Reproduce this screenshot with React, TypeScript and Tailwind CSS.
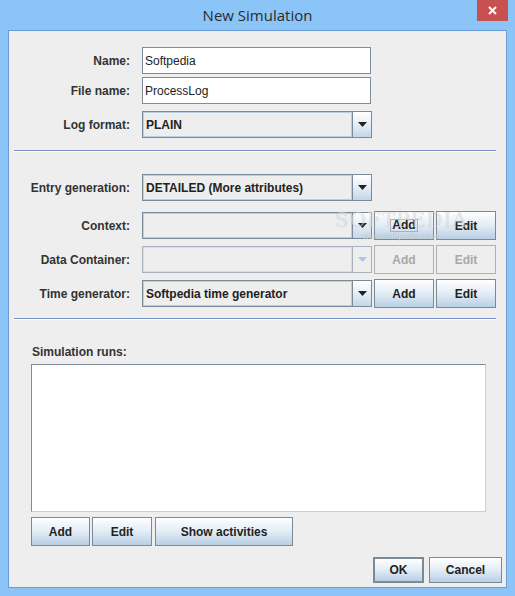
import React from 'react';

const btn =
  'flex items-center justify-center border border-[#7a8a99] bg-gradient-to-b from-white via-[#e3ecf5] to-[#b8cfe5] text-[12px] font-bold text-[#222]';
const btnOff = 'flex items-center justify-center border border-[#b0b0b0] bg-[#eeeeee] text-[12px] font-bold text-[#a8a8a8]';

function Label({ children }: { children: React.ReactNode }) {
  return <div className="w-[121px] shrink-0 text-right text-[12px] font-bold text-[#333]">{children}</div>;
}

function TextField({ value }: { value: string }) {
  return (
    <div className="ml-[12px] flex h-[27px] w-[229px] items-center border border-[#7f8c99] bg-white pl-[2px] text-[12px] text-[#222]">
      {value}
    </div>
  );
}

function Arrow({ disabled }: { disabled?: boolean }) {
  return (
    <svg width="9" height="6" viewBox="0 0 9 6">
      <path d="M0 0 H9 L4.5 5 Z" fill={disabled ? '#a9c6e6' : '#222'} />
    </svg>
  );
}

function Combo({ value, disabled }: { value?: string; disabled?: boolean }) {
  return (
    <div
      className={
        'ml-[12px] flex h-[27px] w-[230px] border ' + (disabled ? 'border-[#a7b2bd]' : 'border-[#7a8a99]')
      }
    >
      <div
        className={
          'flex flex-1 items-center border bg-[#eeeeee] pl-[2px] text-[12px] font-bold text-[#222] ' +
          (disabled ? 'border-[#d8dde2]' : 'border-[#bccfe2]')
        }
      >
        {value}
      </div>
      <div
        className={
          'flex w-[19px] items-center justify-center border-l ' +
          (disabled
            ? 'border-[#a7b2bd] bg-[#eeeeee]'
            : 'border-[#7a8a99] bg-gradient-to-b from-white via-[#e6eef6] to-[#c3d6e9]')
        }
      >
        <Arrow disabled={disabled} />
      </div>
    </div>
  );
}

function Separator({ className }: { className: string }) {
  return (
    <div className={'ml-[5px] w-[482px] ' + className}>
      <div className="h-px bg-[#7893c9]" />
      <div className="h-px bg-white" />
    </div>
  );
}

export default function App() {
  return (
    <div className="flex h-[596px] w-[515px] flex-col bg-[#8bc4f6] font-['Liberation_Sans',Arial,sans-serif]">
      <div className="relative flex h-[30px] shrink-0 items-center justify-center">
        <span className="font-['Open_Sans',sans-serif] text-[15px] text-[#2b2b2b]">New Simulation</span>
        <div className="absolute right-[7px] top-0 flex h-[21px] w-[31px] items-center justify-center bg-[#c75050]">
          <svg width="9" height="9" viewBox="0 0 9 9">
            <path d="M1 1 L8 8 M8 1 L1 8" stroke="white" strokeWidth="2" />
          </svg>
        </div>
      </div>

      <div className="relative mx-2 mb-2 flex-1 border border-[#6d9bd3] bg-[#eeeeee] pt-[16px]">
        <div className="flex items-center">
          <Label>Name:</Label>
          <TextField value="Softpedia" />
        </div>
        <div className="mt-[3px] flex items-center">
          <Label>File name:</Label>
          <TextField value="ProcessLog" />
        </div>
        <div className="mt-[7px] flex items-center">
          <Label>Log format:</Label>
          <Combo value="PLAIN" />
        </div>

        <Separator className="mt-[12px]" />

        <div className="mt-[22px] flex items-center">
          <Label>Entry generation:</Label>
          <Combo value="DETAILED (More attributes)" />
        </div>
        <div className="mt-[10px] flex h-[29px] items-center">
          <Label>Context:</Label>
          <Combo />
          <div className={btn + ' ml-[2px] h-[29px] w-[60px]'}>
            <span className="border border-[#9fb3c8] px-[1px] leading-[11px]">Add</span>
          </div>
          <div className={btn + ' ml-[2px] h-[29px] w-[60px]'}>Edit</div>
        </div>
        <div className="mt-[5px] flex h-[29px] items-center">
          <Label>Data Container:</Label>
          <Combo disabled />
          <div className={btnOff + ' ml-[2px] h-[29px] w-[60px]'}>Add</div>
          <div className={btnOff + ' ml-[2px] h-[29px] w-[60px]'}>Edit</div>
        </div>
        <div className="mt-[5px] flex h-[29px] items-center">
          <Label>Time generator:</Label>
          <Combo value="Softpedia time generator" />
          <div className={btn + ' ml-[2px] h-[29px] w-[60px]'}>Add</div>
          <div className={btn + ' ml-[2px] h-[29px] w-[60px]'}>Edit</div>
        </div>

        <Separator className="mt-[10px]" />

        <div className="ml-[23px] mt-[25px] h-[15px] text-[12px] font-bold leading-[15px] text-[#333]">
          Simulation runs:
        </div>
        <div className="ml-[22px] mt-[4px] h-[148px] w-[455px] border border-[#7f8c99] border-b-[#c9cfd6] border-r-[#c9cfd6] bg-white" />

        <div className="ml-[22px] mt-[5px] flex">
          <div className={btn + ' h-[29px] w-[59px]'}>Add</div>
          <div className={btn + ' ml-[2px] h-[29px] w-[60px]'}>Edit</div>
          <div className={btn + ' ml-[3px] h-[29px] w-[138px]'}>Show activities</div>
        </div>

        <div className="mr-[4px] mt-[11px] flex justify-end">
          <div className={btn + ' h-[26px] w-[51px] border-2 border-[#6f7f90]'}>OK</div>
          <div className={btn + ' ml-[5px] h-[26px] w-[73px]'}>Cancel</div>
        </div>

        <div className="pointer-events-none absolute left-[326px] top-[178px] flex flex-col items-center">
          <span className="font-['DejaVu_Serif',serif] text-[20px] leading-[22px] tracking-[1px] text-white/50 [text-shadow:0_0_1px_rgba(0,0,0,0.2)]">
            SOFTPEDIA
          </span>
          <span className="text-[9px] leading-[10px] text-white/60 [text-shadow:0_0_1px_rgba(0,0,0,0.25)]">
            www.softpedia.com
          </span>
        </div>
      </div>
    </div>
  );
}
